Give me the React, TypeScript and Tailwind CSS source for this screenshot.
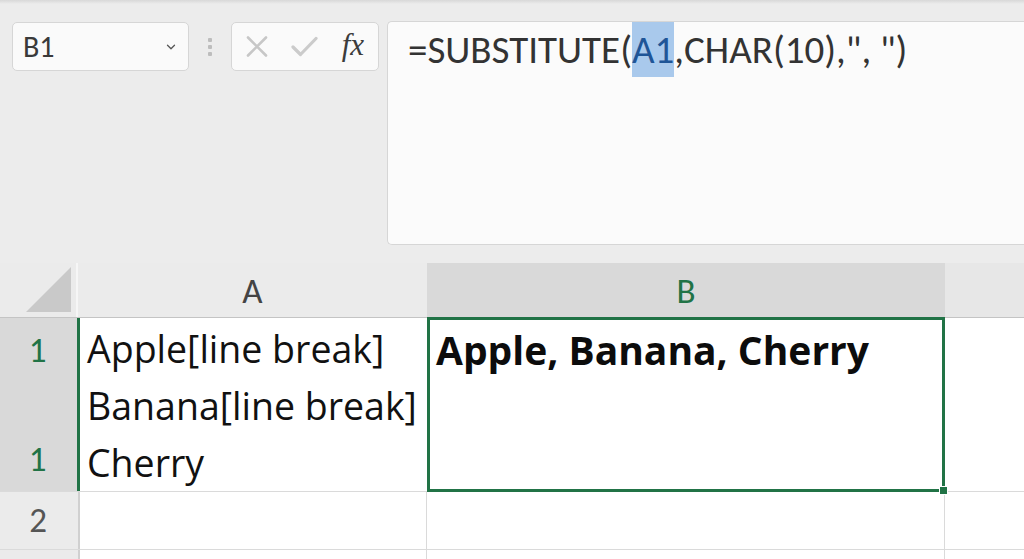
import { ChevronDown } from "lucide-react"

const ui = { fontFamily: "Carlito, Lato, 'Open Sans', sans-serif" }
const cell = { fontFamily: "'Open Sans', 'Noto Sans', sans-serif" }

function Toolbar() {
  return (
    <div className="h-[263px] flex flex-col bg-[#ececec]">
      <div className="h-[4px] bg-gradient-to-b from-[#d8d8d8] to-[#ececec]" />
      <div className="flex items-start pt-[18px] pl-[12px]">
        {/* name box */}
        <div className="w-[177px] h-[49px] rounded-[5px] border border-[#d6d6d6] bg-[#fafafa] flex items-center justify-between pl-[10px] pr-[10px]">
          <span className="text-[30px] text-[#3a3a3a] leading-none">B1</span>
          <ChevronDown className="w-[14px] h-[14px] text-[#555]" strokeWidth={2.2} />
        </div>

        <div className="w-[42px] h-[49px] flex flex-col items-center justify-center gap-[3px]">
          <span className="w-[4px] h-[4px] rounded-[1px] bg-[#bdbdbd]" />
          <span className="w-[4px] h-[4px] rounded-[1px] bg-[#bdbdbd]" />
          <span className="w-[4px] h-[4px] rounded-[1px] bg-[#bdbdbd]" />
        </div>

        {/* cancel / enter / fx */}
        <div className="w-[148px] h-[49px] rounded-[5px] border border-[#d6d6d6] bg-[#fafafa] flex items-center pl-[14px] pr-[14px] justify-between">
          <svg width="22" height="21" viewBox="0 0 22 21" fill="none">
            <path d="M2 1.5 L20 19.5 M20 1.5 L2 19.5" stroke="#c7c7c7" strokeWidth="2.6" strokeLinecap="round" />
          </svg>
          <svg width="27" height="21" viewBox="0 0 27 21" fill="none">
            <path d="M2 11 L9.5 18.5 L25 2.5" stroke="#cbcbcb" strokeWidth="3.2" strokeLinecap="round" strokeLinejoin="round" />
          </svg>
          <span
            className="text-[31px] italic text-[#3c3c3c] leading-none -mt-[4px]"
            style={{ fontFamily: "'Liberation Serif', 'DejaVu Serif', serif" }}
          >
            fx
          </span>
        </div>

        {/* formula bar */}
        <div className="ml-[8px] -mt-[1px] flex-1 h-[224px] rounded-tl-[5px] rounded-bl-[5px] border border-r-0 border-[#d6d6d6] bg-[#fbfbfb] pl-[20px]">
          <div className="text-[39px] leading-[55px] text-[#333] whitespace-nowrap">
            =SUBSTITUTE(
            <span className="inline-block h-[55px] leading-[55px] bg-[#a9c9ec] text-[#1f5597]">A1</span>
            ,CHAR(10),", ")
          </div>
        </div>
      </div>
    </div>
  )
}

function HeaderRow() {
  return (
    <div className="h-[55px] flex border-b border-[#c4c4c4] bg-[#ebebeb]">
      <div className="w-[78px] flex items-end justify-end pr-[5px] pb-[5px] border-r-2 border-[#f6f6f6]">
        <svg width="45" height="45" viewBox="0 0 45 45">
          <path d="M0 45 L45 0 L45 45 Z" fill="#c9c9c9" />
        </svg>
      </div>
      <div className="w-[349px] flex items-center justify-center text-[35px] text-[#444] pt-[2px]">A</div>
      <div className="w-[518px] flex items-center justify-center text-[35px] text-[#217346] bg-[#d9d9d9] pt-[2px]">
        B
      </div>
      <div className="flex-1 bg-[#e7e7e7]" />
    </div>
  )
}

function Row1() {
  return (
    <div className="h-[173px] flex">
      <div className="w-[80px] bg-[#d9d9d9] border-r-[3px] border-[#217346] flex flex-col justify-between items-center pr-[2px] py-[12px] text-[35px] text-[#217346] leading-[40px]">
        <span>1</span>
        <span>1</span>
      </div>
      <div
        className="w-[347px] bg-white pl-[7px] pt-[2px] text-[37.5px] leading-[57px] text-[#111] whitespace-nowrap"
        style={cell}
      >
        <div>Apple[line break]</div>
        <div>Banana[line break]</div>
        <div>Cherry</div>
      </div>
      <div className="relative w-[518px] -mt-[1px] -mb-[1px] border-[3px] border-[#217346] bg-white pl-[6px] pt-[2px]">
        <div className="text-[39px] font-bold leading-[56px] text-[#0c0c0c] whitespace-nowrap" style={cell}>
          Apple, Banana, Cherry
        </div>
        <span className="absolute -right-[6px] -bottom-[6px] w-[9px] h-[9px] bg-[#217346] border border-white" />
      </div>
      <div className="flex-1 bg-white" />
    </div>
  )
}

function Row2() {
  return (
    <div className="h-[58px] flex border-t border-[#dadada]">
      <div className="w-[80px] bg-[#ebebeb] border-r-2 border-[#d0d0d0] flex items-center justify-center text-[35px] text-[#555] pr-[2px]">
        2
      </div>
      <div className="w-[347px] bg-white border-r border-[#dadada]" />
      <div className="w-[518px] bg-white border-r border-[#dadada]" />
      <div className="flex-1 bg-white" />
    </div>
  )
}

function Row3() {
  return (
    <div className="flex-1 flex border-t border-[#dadada]">
      <div className="w-[80px] bg-[#ebebeb] border-r-2 border-[#d0d0d0]" />
      <div className="w-[347px] bg-white border-r border-[#dadada]" />
      <div className="w-[518px] bg-white border-r border-[#dadada]" />
      <div className="flex-1 bg-white" />
    </div>
  )
}

export default function App() {
  return (
    <div className="w-[1024px] h-[559px] overflow-hidden flex flex-col bg-[#ececec]" style={ui}>
      <Toolbar />
      <HeaderRow />
      <Row1 />
      <Row2 />
      <Row3 />
    </div>
  )
}
